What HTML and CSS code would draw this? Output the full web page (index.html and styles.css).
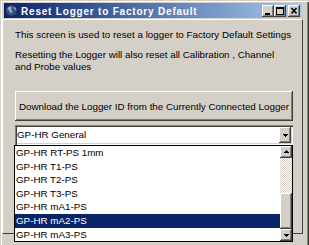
FILE: index.html
```html
<!DOCTYPE html>
<html>
    <head>
        <meta charset="UTF-8">
        <title>Reset Logger to Factory Default</title>
        <link rel="stylesheet" href="styles.css">
    </head>
    <body>
        <div class="window">
            <div class="titlebar">
                <svg class="app-icon" viewBox="0 0 13 13">
                    <circle cx="6.5" cy="6.5" r="5.8" fill="#34507e" stroke="#1b2a45" stroke-width="1"/>
                    <path d="M3 3.5c1.5-1 3-1.2 4 0l-1 2 1.5 1.5-1 2.5-2-1.5-.5-2L2.3 5z" fill="#9aa9c0"/>
                    <path d="M8.6 2.6l2 1.5.5 2.5-1.6-1z" fill="#9aa9c0"/>
                </svg>
                <span class="title">Reset Logger to Factory Default</span>
                <div class="caption-buttons">
                    <span class="cap-btn">
                        <svg width="12" height="12"><rect x="3" y="8" width="5" height="2"/></svg>
                    </span>
                    <span class="cap-btn">
                        <svg width="12" height="12"><path d="M2 2h8v2H2zM2 4h1v5H2zM9 4h1v5H9zM2 9h8v1H2z"/></svg>
                    </span>
                    <span class="cap-btn close">
                        <svg width="12" height="12"><path d="M3.5 3l5 5.5M8.5 3l-5 5.5" stroke="#000" stroke-width="1.7"/></svg>
                    </span>
                </div>
            </div>

            <div class="panel">
                <p class="info">This screen is used to reset a logger to Factory Default Settings</p>
                <p class="info">Resetting the Logger will also reset all Calibration , Channel<br>and Probe values</p>

                <button class="action" type="button">Download the Logger ID from the Currently Connected Logger</button>

                <div class="combo">
                    <div class="combo-field">GP-HR General</div>
                    <span class="drop-btn">
                        <svg width="12" height="16"><path d="M4 7h5v1H4zM5 8h3v1H5zM6 9h1v1H6z"/></svg>
                    </span>

                    <div class="dropdown">
                        <div class="options">
                            <div class="option">GP-HR RT-PS 1mm</div>
                            <div class="option">GP-HR T1-PS</div>
                            <div class="option">GP-HR T2-PS</div>
                            <div class="option">GP-HR T3-PS</div>
                            <div class="option">GP-HR mA1-PS</div>
                            <div class="option selected">GP-HR mA2-PS</div>
                            <div class="option">GP-HR mA3-PS</div>
                        </div>
                        <div class="scrollbar">
                            <span class="sb-btn">
                                <svg width="12" height="12"><path d="M6 4h1v1H6zM5 5h3v1H5zM4 6h5v1H4z"/></svg>
                            </span>
                            <span class="sb-track"></span>
                            <span class="sb-thumb"></span>
                            <span class="sb-btn">
                                <svg width="12" height="12"><path d="M4 5h5v1H4zM5 6h3v1H5zM6 7h1v1H6z"/></svg>
                            </span>
                        </div>
                    </div>
                </div>
            </div>
        </div>
    </body>
</html>
```

FILE: styles.css
```css
body {
    margin: 0;
    background-color: #d4d0c8;
    font-family: "Liberation Sans", Arial, sans-serif;
    font-size: 9.8px;
    color: #000;
}

.window {
    width: 309px;
    height: 245px;
    box-sizing: border-box;
    padding: 3px 7px 0 4px;
    background-color: #d4d0c8;
    box-shadow: inset 1px 1px #d4d0c8, inset 2px 2px #fff, inset -1px 0 #404040, inset -2px 0 #808080;
    overflow: hidden;
}

/* title bar */
.titlebar {
    display: flex;
    align-items: center;
    height: 15px;
    padding-left: 1px;
    background: linear-gradient(to right, #0a246a, #a6caf0);
    color: #fff;
}

.app-icon {
    width: 13px;
    height: 13px;
    margin-right: 3px;
    flex-shrink: 0;
}

.title {
    flex: 1;
    font-size: 10px;
    font-weight: bold;
    letter-spacing: 0.8px;
    line-height: 15px;
    padding-top: 1px;
    white-space: nowrap;
}

.caption-buttons {
    display: flex;
    margin-right: 2px;
}

.cap-btn {
    display: block;
    width: 12px;
    height: 12px;
    background-color: #d4d0c8;
    box-shadow: inset -1px -1px #404040, inset 1px 1px #fff, inset -2px -2px #808080;
}

.cap-btn svg {
    display: block;
}

.cap-btn.close {
    margin-left: 2px;
}

/* main panel */
.panel {
    position: relative;
    width: 301px;
    height: 215px;
    box-sizing: border-box;
    margin: 1px 0 0 -2px;
    padding: 9px 9px 0 12px;
    border: 1px solid;
    border-color: #fff #404040 #404040 #fff;
}

.info {
    margin: 0;
    line-height: 12px;
    white-space: nowrap;
}

.info + .info {
    margin-top: 8px;
}

.action {
    display: block;
    width: 278px;
    height: 30px;
    margin-top: 18px;
    padding: 0;
    border: none;
    font-family: "Liberation Sans", Arial, sans-serif;
    font-size: 9.8px;
    color: #000;
    background-color: #d4d0c8;
    box-shadow: inset -1px -1px #404040, inset 1px 1px #fff, inset -2px -2px #808080;
    white-space: nowrap;
}

/* combo box */
.combo {
    position: relative;
    display: flex;
    align-items: center;
    width: 278px;
    height: 20px;
    box-sizing: border-box;
    margin-top: 4px;
    padding: 2px;
    background-color: #fff;
    box-shadow: inset 1px 1px #808080, inset 2px 2px #404040, inset -1px -1px #fff, inset -2px -2px #d4d0c8;
}

.combo-field {
    flex: 1;
    line-height: 16px;
    white-space: nowrap;
}

.drop-btn,
.sb-btn,
.sb-thumb {
    display: block;
    width: 12px;
    background-color: #d4d0c8;
    box-shadow: inset -1px -1px #404040, inset 1px 1px #fff, inset -2px -2px #808080;
}

.drop-btn {
    height: 16px;
}

.drop-btn svg,
.sb-btn svg {
    display: block;
}

/* open list */
.dropdown {
    position: absolute;
    top: 100%;
    left: -1px;
    width: 279px;
    box-sizing: border-box;
    display: flex;
    border: 1px solid #000;
    background-color: #fff;
}

.options {
    flex: 1;
}

.option {
    height: 13.6px;
    line-height: 13.6px;
    padding-left: 1px;
    white-space: nowrap;
}

.option.selected {
    background-color: #0a246a;
    color: #fff;
}

.scrollbar {
    display: flex;
    flex-direction: column;
    width: 12px;
}

.sb-btn {
    height: 12px;
}

.sb-track {
    flex: 1;
    background: repeating-conic-gradient(#fff 0 25%, #d4d0c8 0 50%) 0 0 / 2px 2px;
}

.sb-thumb {
    height: 36px;
}
```
